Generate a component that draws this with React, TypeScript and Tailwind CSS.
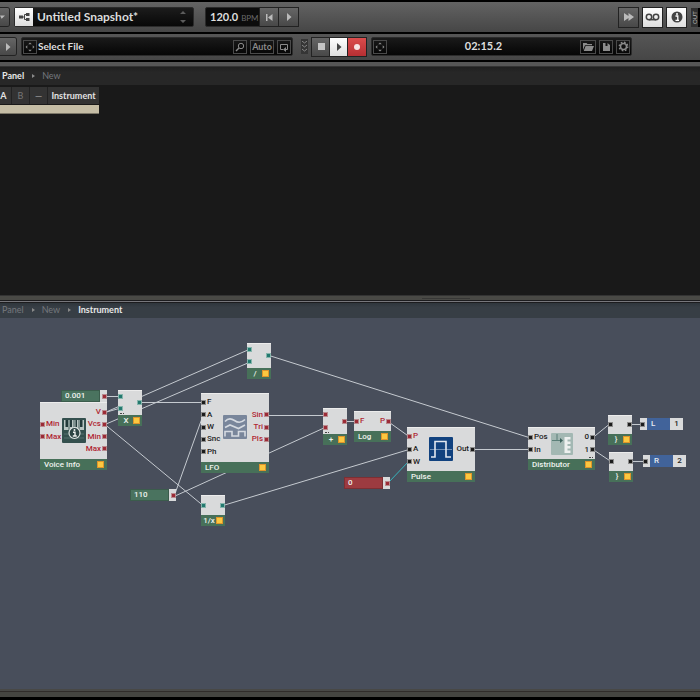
import type { ReactNode } from 'react'
import { clsx } from 'clsx'

type Tone = 'red' | 'black' | 'teal'
type PortDef = { label?: string; tone: Tone } | null

type NodeDef = {
  id: string
  title: string
  // left, top and width on the canvas
  box: string
  body: string
  inputs: PortDef[]
  outputs: PortDef[]
  icon?: ReactNode
  more?: 'left' | 'right'
}

const portTone: Record<Tone, string> = {
  red: 'bg-[#9c2b36] border-[#b98a8e]',
  black: 'bg-[#1c1c1c] border-[#8d8d8d]',
  teal: 'bg-[#23796f] border-[#86b5ac]',
}

const red = (label?: string): PortDef => ({ label, tone: 'red' })
const black = (label?: string): PortDef => ({ label, tone: 'black' })
const teal = (): PortDef => ({ tone: 'teal' })

function VoiceIcon() {
  return (
    <svg width="24" height="25" viewBox="0 0 24 25">
      <rect width="24" height="25" rx="1" fill="#34504e" />
      <path d="M2 2h20v10H2z" fill="#b9c5c2" />
      <path d="M3.500 2h2.500v7H3.500zM8 2h2v7H8zM13.500 2h1.500v7h-1.500zM18 2h2.500v7H18z" fill="#233a3a" />
      <path d="M7 2v10M12 2v10M17 2v10" stroke="#4a6462" strokeWidth="1" />
      <path d="M2 16h20M2 20h20" stroke="#55716e" />
      <circle cx="12.500" cy="15" r="5.500" fill="#2b4443" stroke="#dfe5e3" strokeWidth="1.200" />
      <path d="M11 14.300h2v3.500M10.800 18h4" stroke="#eef1f0" strokeWidth="1.400" fill="none" />
      <circle cx="12.500" cy="12" r="1" fill="#eef1f0" />
    </svg>
  )
}

function LfoIcon() {
  return (
    <svg width="24" height="24" viewBox="0 0 24 24">
      <rect width="24" height="24" rx="1" fill="#79869b" />
      <g fill="none" stroke="#d5dae1" strokeWidth="1.600">
        <path d="M2 6.500C5 3 8 3 11.500 5.500S18 8.500 22 4.500" />
        <path d="M2 12.500l5-2.500 8.500 3.500L22 10" />
        <path d="M2 21.500v-5h7v4.500h6.500v-4.500H22v5" />
      </g>
    </svg>
  )
}

function PulseIcon() {
  return (
    <svg width="24" height="24" viewBox="0 0 24 24">
      <rect width="24" height="24" rx="1" fill="#11427f" />
      <path d="M1 12.500h22" stroke="#6f8fb5" strokeWidth="1" />
      <path d="M2 20h4V4.500h11V20h5" fill="none" stroke="#e1e8f0" strokeWidth="1.600" />
    </svg>
  )
}

function DistributorIcon() {
  return (
    <svg width="22" height="22" viewBox="0 0 22 22">
      <rect width="22" height="22" rx="1" fill="#a3b8b3" />
      <path d="M1 7.500h9M6 1v6" stroke="#5b7f78" strokeWidth="1" />
      <path d="M9 5l3 2.500L9 10z" fill="#3c625c" />
      <path d="M13.500 4h6v2.500h-3v2h3V11h-3v2h3v2.500h-3v2h3V20h-6z" fill="#edf0ef" />
    </svg>
  )
}

const nodes: NodeDef[] = [
  {
    id: 'voice', title: 'Voice Info', box: 'left-[40px] top-[84px] w-[67px]', body: 'h-[57px] py-1',
    inputs: [null, red('Min'), red('Max'), null],
    outputs: [red('V'), red('Vcs'), red('Min'), red('Max')],
    icon: <VoiceIcon />,
  },
  {
    id: 'mul', title: 'X', box: 'left-[118px] top-[72px] w-[24px]', body: 'h-[25px]',
    inputs: [teal(), teal()], outputs: [teal()], more: 'left',
  },
  {
    id: 'div', title: '/', box: 'left-[247px] top-[25px] w-[24px]', body: 'h-[25px]',
    inputs: [teal(), teal()], outputs: [teal()],
  },
  {
    id: 'lfo', title: 'LFO', box: 'left-[201px] top-[75px] w-[68px]', body: 'h-[69px] pt-[3px] pb-1',
    inputs: [black('F'), black('A'), black('W'), black('Snc'), black('Ph')],
    outputs: [null, red('Sin'), red('Tri'), red('Pls'), null],
    icon: <LfoIcon />,
  },
  {
    id: 'inv', title: '1/x', box: 'left-[201px] top-[177px] w-[24px]', body: 'h-[20px]',
    inputs: [teal()], outputs: [teal()],
  },
  {
    id: 'add', title: '+', box: 'left-[323px] top-[90px] w-[24px]', body: 'h-[26px]',
    inputs: [red(), red()], outputs: [red()], more: 'left',
  },
  {
    id: 'log', title: 'Log', box: 'left-[354px] top-[93px] w-[37px]', body: 'h-[20px]',
    inputs: [red('F')], outputs: [red('P')],
  },
  {
    id: 'pulse', title: 'Pulse', box: 'left-[407px] top-[109px] w-[68px]', body: 'h-[44px] py-[3px]',
    inputs: [red('P'), black('A'), black('W')],
    outputs: [black('Out')],
    icon: <PulseIcon />,
  },
  {
    id: 'dist', title: 'Distributor', box: 'left-[528px] top-[109px] w-[67px]', body: 'h-[32px] pt-1 pb-[3px]',
    inputs: [black('Pos'), black('In')],
    outputs: [black('0'), black('1')],
    icon: <DistributorIcon />, more: 'right',
  },
  {
    id: 'voiceL', title: '}', box: 'left-[608px] top-[97px] w-[24px]', body: 'h-[19px]',
    inputs: [black()], outputs: [black()],
  },
  {
    id: 'voiceR', title: '}', box: 'left-[609px] top-[134px] w-[24px]', body: 'h-[19px]',
    inputs: [black()], outputs: [black()],
  },
]

const constants = [
  { value: '0.001', box: 'left-[61px] top-[72px]', color: 'bg-[#4a735f]' },
  { value: '110', box: 'left-[130px] top-[171px]', color: 'bg-[#4a735f]' },
  { value: '0', box: 'left-[344px] top-[159px]', color: 'bg-[#9d3b40]' },
]

const outs = [
  { name: 'L', channel: '1', box: 'left-[640px] top-[100px]' },
  { name: 'R', channel: '2', box: 'left-[643px] top-[137px]' },
]

// x1, y1, x2, y2
const wires: [number, number, number, number][] = [
  [105, 78, 119, 78],
  [105, 94, 119, 90],
  [105, 94, 249, 31],
  [105, 106, 249, 44],
  [105, 106, 203, 187],
  [139, 84, 203, 84],
  [174, 178, 203, 97],
  [174, 178, 325, 109],
  [267, 97, 325, 97],
  [345, 103, 356, 103],
  [388, 103, 409, 118],
  [223, 187, 409, 131],
  [269, 37, 529, 119],
  [472, 131, 529, 131],
  [593, 119, 609, 106],
  [593, 131, 611, 143],
  [630, 106, 642, 106],
  [631, 143, 645, 143],
]

function Port({ port, side }: { port: PortDef; side: 'in' | 'out' }) {
  return (
    <div className={clsx('flex min-h-0 flex-1 items-center gap-px', side === 'out' && 'flex-row-reverse')}>
      {port && <i className={clsx('size-[5px] shrink-0 border', portTone[port.tone])} />}
      {port?.label && (
        <span className={port.tone === 'red' ? 'text-[#b02633]' : 'text-[#1d1d1d]'}>{port.label}</span>
      )}
    </div>
  )
}

function Node({ node }: { node: NodeDef }) {
  const small = !node.icon && node.title !== 'Log'
  return (
    <div className={clsx('absolute', node.box)}>
      <div className={clsx('relative grid grid-cols-[minmax(0,1fr)_auto_minmax(0,1fr)] bg-[#d9dadb] shadow-[inset_0_1px_0_#ececec]', node.body)}>
        <div className="flex flex-col">
          {node.inputs.map((p, i) => <Port key={i} port={p} side="in" />)}
        </div>
        <div className="self-center">{node.icon}</div>
        <div className="flex flex-col">
          {node.outputs.map((p, i) => <Port key={i} port={p} side="out" />)}
        </div>
        {node.more && (
          <i className={clsx('absolute bottom-px w-1 border-b border-dotted border-[#444]', node.more === 'left' ? 'left-0.5' : 'right-0.5')} />
        )}
      </div>
      <div className={clsx('flex h-[11px] items-center justify-between bg-[#477059] text-[#eef2ee]', small ? 'pr-0.5 pl-px' : 'pr-[3px] pl-1')}>
        <span className={clsx(small && 'flex-1 text-center')}>{node.title}</span>
        <i className="size-[7px] shrink-0 border border-[#e0952b] bg-[#fbc840]" />
      </div>
    </div>
  )
}

function Structure() {
  return (
    <div className="relative min-h-[371px] flex-1 overflow-hidden bg-[#484e5b] font-['Roboto','Liberation_Sans',sans-serif] text-[8px] leading-[10px] font-medium">
      <svg className="absolute inset-0 size-full" fill="none">
        {wires.map(([x1, y1, x2, y2], i) => (
          <line key={i} x1={x1} y1={y1 + 0.5} x2={x2} y2={y2 + 0.5} stroke="#c5cad0" />
        ))}
        <line x1="388" y1="165" x2="409" y2="143" stroke="#35b5bd" />
      </svg>
      {nodes.map(n => <Node key={n.id} node={n} />)}
      {constants.map(c => (
        <div key={c.value} className={clsx('absolute flex h-3 w-[46px] items-stretch', c.box)}>
          <span className={clsx('flex-1 border border-black/20 pl-[3px] text-[#eef2ee]', c.color)}>{c.value}</span>
          <span className="flex w-[7px] items-center justify-end bg-[#d9dadb]">
            <i className={clsx('size-[5px] border', portTone.red)} />
          </span>
        </div>
      ))}
      {outs.map(o => (
        <div key={o.name} className={clsx('absolute flex h-3 w-[43px] items-center bg-[#d9dadb]', o.box)}>
          <i className={clsx('mr-0.5 size-[5px] border', portTone.black)} />
          <span className="flex h-full w-[23px] items-center bg-[#41639a] pl-1 text-[#e8ecf2]">{o.name}</span>
          <span className="flex-1 text-center text-[#1d1d1d]">{o.channel}</span>
        </div>
      ))}
    </div>
  )
}

const Play = () => (
  <svg width="8" height="8" viewBox="0 0 8 8" fill="currentColor"><path d="M2 0l4.500 4L2 8z" /></svg>
)

const Target = () => (
  <svg width="12" height="12" viewBox="0 0 12 12" fill="currentColor">
    <path d="M6 1.500l1.800 1.800H4.200zM6 10.500L4.200 8.700h3.600zM1.500 6l1.800-1.800v3.600zM10.500 6L8.700 7.800V4.200z" />
  </svg>
)

const Chevron = () => (
  <svg width="3" height="4" viewBox="0 0 3 4" fill="#8a8a8a"><path d="M0 0l3 2-3 2z" /></svg>
)

const raised = 'flex items-center justify-center bg-linear-to-b from-[#666] to-[#484848] text-[#bbb] shadow-[0_0_0_1px_#222]'
const lit = 'flex items-center justify-center bg-linear-to-b from-white to-[#dedede] text-[#444] shadow-[0_0_0_1px_#222]'
const small = 'flex h-3.5 items-center justify-center border border-[#4a4a4a] text-[#8b8b8b]'

function TopBar() {
  return (
    <div className="flex h-[30px] items-center bg-linear-to-b from-[#636363] to-[#464646]">
      <button aria-label="Menu" className={clsx(raised, 'h-[18px] w-[9px] rounded-r-xs')}>
        <svg width="6" height="5" viewBox="0 0 6 5" fill="currentColor" className="mr-1"><path d="M0 0h6L2 4z" /></svg>
      </button>
      <div className="ml-[5px] flex h-5 w-[180px] items-center rounded-xs border border-[#2b2b2b] bg-linear-to-b from-[#1c1c1c] to-[#080808]">
        <button aria-label="Snapshot view" className="flex h-full w-[18px] items-center justify-center bg-linear-to-b from-white to-[#ddd] text-[#444]">
          <svg width="11" height="8" viewBox="0 0 11 8">
            <path d="M0 2.500h4v3H0zM7 0h3.500v3H7zM7 5h3.500v3H7z" fill="currentColor" />
            <path d="M4 4h1.500M7.500 1.500h-2v5h2" fill="none" stroke="currentColor" />
          </svg>
        </button>
        <button className="flex flex-1 items-center justify-between pr-[7px] pl-1 text-xs font-bold text-[#dcdcdc]">
          Untitled Snapshot*
          <svg width="6" height="12" viewBox="0 0 6 12" fill="#5c5c5c"><path d="M0 3l3-3 3 3zM0 9h6l-3 3z" /></svg>
        </button>
      </div>
      <div className="ml-[11px] flex h-5 items-center rounded-xs border border-[#2b2b2b] bg-[#0c0c0c]">
        <div className="flex w-[54px] items-baseline gap-[3px] pl-1 text-[11px] leading-4 font-bold text-[#dedede]">
          120.0 <span className="text-[8px] font-normal text-[#6a6a6a]">BPM</span>
        </div>
        <button aria-label="Restart" className={clsx(raised, 'h-[18px] w-[18px]')}>
          <svg width="7" height="7" viewBox="0 0 7 7" fill="currentColor"><path d="M0 0h1.500v7H0zM6.500 0v7L2 3.500z" /></svg>
        </button>
        <button aria-label="Run" className={clsx(raised, 'ml-px h-[18px] w-[19px]')}><Play /></button>
      </div>
      <div className="ml-auto flex gap-[5px]">
        <button aria-label="Toggle view" className={clsx(raised, 'h-[19px] w-[19px]')}>
          <svg width="10" height="8" viewBox="0 0 10 8" fill="currentColor">
            <path d="M0 0l4.500 3V0L10 4 4.500 8V5L0 8z" />
          </svg>
        </button>
        <button aria-label="Tape" className={clsx(lit, 'h-[19px] w-[19px]')}>
          <svg width="15" height="8" viewBox="0 0 15 8" fill="none" stroke="currentColor" strokeWidth="1.500">
            <circle cx="4" cy="4" r="2.700" /><circle cx="11" cy="4" r="2.700" /><path d="M4 6.700h7" />
          </svg>
        </button>
        <button aria-label="Info" className={clsx(lit, 'h-[19px] w-[19px]')}>
          <svg width="12" height="12" viewBox="0 0 12 12">
            <circle cx="6" cy="6" r="5.500" fill="currentColor" />
            <path d="M4.500 5h2.300v4M4.500 9.300h3.500" stroke="#fff" strokeWidth="1.300" fill="none" />
            <circle cx="6" cy="2.900" r="1" fill="#fff" />
          </svg>
        </button>
        <div className="flex h-[19px] w-[9px] bg-[#303030] text-[6px] leading-[7px] text-[#b5b5b5]">
          <span className="w-[7px] rotate-180 text-center [writing-mode:vertical-rl]">OUT</span>
          <i className="w-0.5 bg-black" />
        </div>
      </div>
    </div>
  )
}

function PlayerBar() {
  return (
    <div className="flex h-[26px] items-center bg-linear-to-b from-[#565656] to-[#464646] pb-px">
      <button aria-label="Play input" className={clsx(raised, 'h-[17px] w-4 rounded-r-xs')}><Play /></button>
      <div className="ml-[5px] flex h-[19px] w-[272px] items-center gap-[3px] rounded-xs border border-[#2b2b2b] bg-linear-to-b from-[#1a1a1a] to-[#060606] px-px">
        <button aria-label="Input target" className={clsx(small, 'w-3.5')}><Target /></button>
        <button className="-ml-[2px] flex-1 text-left text-[10px] font-bold text-[#dedede]">Select File</button>
        <button aria-label="Search" className={clsx(small, 'w-3.5')}>
          <svg width="10" height="10" viewBox="0 0 10 10" fill="none" stroke="currentColor"><circle cx="6" cy="4" r="2.700" /><path d="M4 6L1 9" strokeWidth="1.500" /></svg>
        </button>
        <button className={clsx(small, 'w-6 text-[9px] font-bold')}>Auto</button>
        <button aria-label="Loop" className={clsx(small, 'w-3.5')}>
          <svg width="10" height="10" viewBox="0 0 10 10" fill="none" stroke="currentColor"><path d="M4 7.500H1.500v-5h7v5H7" /><path d="M7 5v5L4 7.500z" fill="currentColor" stroke="none" /></svg>
        </button>
      </div>
      <div className="ml-2 flex h-[15px] w-[7px] items-center justify-center bg-[#353535] text-[#888]">
        <svg width="5" height="11" viewBox="0 0 5 11" fill="none" stroke="currentColor"><path d="M0 0l2.500 2L5 0M0 4l2.500 2L5 4M0 8l2.500 2L5 8" /></svg>
      </div>
      <div className="ml-1 flex h-[18px] rounded-xs">
        <button aria-label="Stop" className={clsx(raised, 'w-[18px]')}><i className="size-[7px] bg-[#c4c4c4]" /></button>
        <button aria-label="Play" className={clsx(lit, 'w-[18px]')}><Play /></button>
        <button aria-label="Record" className="flex w-[18px] items-center justify-center bg-linear-to-b from-[#dc4c4c] to-[#b62f33] shadow-[0_0_0_1px_#222]">
          <i className="size-1.5 rounded-full bg-[#f6e3e3]" />
        </button>
      </div>
      <div className="ml-[5px] flex h-[19px] w-[261px] items-center gap-[3px] rounded-xs border border-[#2b2b2b] bg-linear-to-b from-[#1a1a1a] to-[#060606] px-px">
        <button aria-label="Output target" className={clsx(small, 'w-3.5')}><Target /></button>
        <span className="flex-1 text-center text-[11px] font-bold text-[#dedede]">02:15.2</span>
        <button aria-label="Open" className={clsx(small, 'w-4')}>
          <svg width="11" height="8" viewBox="0 0 11 8" fill="currentColor"><path d="M0 7V0h3.500l1 1H9v1.200H2zM2.600 3H11L9 8H.7z" /></svg>
        </button>
        <button aria-label="Save" className={clsx(small, 'w-3.5')}>
          <svg width="7" height="8" viewBox="0 0 7 8" fill="currentColor"><path d="M0 0h2.500v3h2V0L7 2v6H0z" /></svg>
        </button>
        <button aria-label="Settings" className={clsx(small, 'w-3.5')}>
          <svg width="11" height="11" viewBox="0 0 11 11" fill="none" stroke="currentColor">
            <circle cx="5.500" cy="5.500" r="3" strokeWidth="1.500" />
            <circle cx="5.500" cy="5.500" r="4.300" strokeWidth="1.300" strokeDasharray="1.690 1.690" />
          </svg>
        </button>
      </div>
    </div>
  )
}

function Crumbs({ items, active, className }: { items: string[]; active: string; className: string }) {
  return (
    <nav className={clsx('flex items-center gap-2 pb-px pl-0.5 text-[9px] leading-3 font-bold', className)}>
      {items.map((item, i) => (
        <span key={item} className="flex items-center gap-[7px]">
          {i > 0 && <Chevron />}
          <a href="#" className={item === active ? 'text-[#e8e8e8]' : 'font-normal text-[#75787d]'}>{item}</a>
        </span>
      ))}
    </nav>
  )
}

export default function App() {
  return (
    <div className="flex min-h-screen flex-col overflow-hidden bg-black pt-0.5 pb-[3px] font-['Lato','Open_Sans',sans-serif]">
      <TopBar />
      <div className="h-0.5" />
      <PlayerBar />
      <div className="h-0.5" />
      <div className="h-[5px] border-b border-[#333] bg-[#565656]" />
      <Crumbs items={['Panel', 'New']} active="Panel" className="h-[18px] bg-linear-to-b from-[#1f1f1f] to-[#272727] to-30%" />
      <div className="h-[210px] bg-[#191919] pt-0.5">
        <div className="w-[99px]">
          <div className="flex h-[17px] items-stretch bg-[#333] text-[9px] font-bold text-[#e2e2e2]">
            <button className="w-3 border-r border-[#222] pr-1 text-center">A</button>
            <button className="w-[18px] border-r border-[#222] font-normal text-[#777]">B</button>
            <button className="w-[18px] border-r border-[#222] text-[#888]">—</button>
            <button className="flex-1">Instrument</button>
          </div>
          <div className="mt-px h-[9px] border-b border-[#7c7768] bg-[#c5bda5]" />
        </div>
      </div>
      <div className="flex h-[5px] items-center border-t border-[#333] bg-[#494945]">
        <i className="mx-auto h-px w-12 translate-x-24 bg-[#383836]" />
      </div>
      <div className="h-[3px] border-y border-[#1c1c1e] bg-[#77777c]" />
      <Crumbs items={['Panel', 'New', 'Instrument']} active="Instrument" className="h-[15px] bg-linear-to-b from-[#2f363c] to-[#373e45] to-30%" />
      <Structure />
      <div className="h-[3px] border-b border-[#302c2a] bg-[#484846]" />
      <div className="h-[5px] bg-[#454541]" />
    </div>
  )
}
